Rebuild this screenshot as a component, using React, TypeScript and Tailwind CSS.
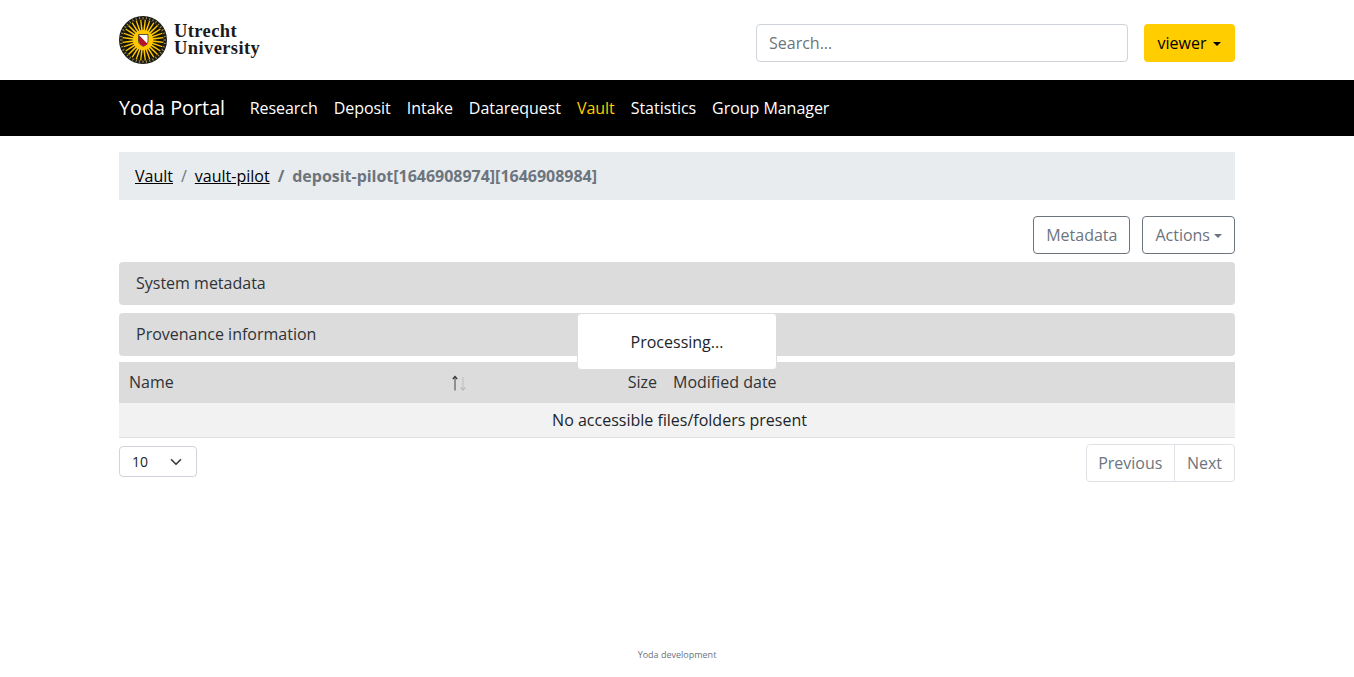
const navItems = ["Research", "Deposit", "Intake", "Datarequest", "Vault", "Statistics", "Group Manager"];

function Seal() {
  const rays = Array.from({ length: 28 }, (_, i) => (i * 360) / 28);
  const specks = Array.from({ length: 40 }, (_, i) => (i * 360) / 40);
  return (
    <svg width="48" height="48" viewBox="0 0 48 48" className="shrink-0">
      <circle cx="24" cy="24" r="24" fill="#1a1a12" />
      {specks.map((a) => (
        <rect key={a} x="23.500" y="1" width="1" height="2" fill="#a89a6a" transform={`rotate(${a} 24 24)`} />
      ))}
      <circle cx="24" cy="24" r="20.500" fill="#ffc800" />
      {rays.map((a) => (
        <polygon key={a} points="22.300,3.500 25.700,3.500 24.300,14 23.700,14" fill="#15130a" transform={`rotate(${a} 24 24)`} />
      ))}
      <path d="M19.500 18.500h9.500v6.500c0 2.800-2.300 4.300-4.700 5.300-2.400-1-4.800-2.500-4.800-5.300z" fill="#fff" stroke="#1a1a12" strokeWidth="0.7" />
      <path d="M19.900 19 28.700 28c-1 1-2.800 1.700-4.400 2.200-2.300-1-4.400-2.400-4.400-5.200z" fill="#b5122b" />
    </svg>
  );
}

function SortIcon() {
  return (
    <svg width="16" height="18" viewBox="0 0 16 18" fill="none" className="shrink-0">
      <path d="M4 17.500V5" stroke="#777" strokeWidth="1.500" />
      <path d="M1.800 6 4 3.500 6.200 6" stroke="#333" strokeWidth="1.200" />
      <path d="M12 4v12.500" stroke="#c8c8c8" strokeWidth="1.500" />
      <path d="M9.800 14.500 12 17l2.200-2.500" stroke="#b8b8b8" strokeWidth="1.200" />
    </svg>
  );
}

export default function App() {
  return (
    <div className="flex min-h-[677px] flex-col bg-white font-['Open_Sans',sans-serif] text-[16px] text-[#212529]">
      <header className="h-20 px-[119px]">
        <div className="flex h-full items-center justify-between">
          <div className="flex items-center gap-[7px]">
            <Seal />
            <div className="font-['Liberation_Serif',serif] text-[18.500px] font-bold leading-[17px] tracking-[0.4px] text-[#1a1a1a]">
              <div>Utrecht</div>
              <div>University</div>
            </div>
          </div>
          <div className="mt-[6px] flex items-center gap-4">
            <input
              placeholder="Search..."
              className="h-[38px] w-[372px] rounded border border-[#ced4da] px-3 text-[16px] outline-none placeholder:text-[#6c757d]"
            />
            <button className="flex h-[38px] w-[91px] items-center justify-center rounded bg-[#ffcd00] text-[16px] text-black">
              viewer
              <span className="ml-[7px] mt-[1px] h-0 w-0 border-x-[4.800px] border-t-[4.800px] border-x-transparent border-t-current" />
            </button>
          </div>
        </div>
      </header>

      <nav className="flex h-14 items-center bg-black px-[119px] text-white">
        <span className="mr-[16.500px] text-[19.800px]">Yoda Portal</span>
        <ul className="flex tracking-[-0.04px]">
          {navItems.map((item) => (
            <li key={item} className={item === "Vault" ? "px-2 text-[#ffcd00]" : "px-2"}>
              {item}
            </li>
          ))}
        </ul>
      </nav>

      <main className="flex flex-1 flex-col px-[119px] pt-4">
        <div className="flex h-12 items-center bg-[#e9ecef] px-4">
          <a className="text-black underline">Vault</a>
          <span className="px-2 text-[#6c757d]">/</span>
          <a className="text-black underline">vault-pilot</a>
          <span className="px-2 font-bold text-[#6c757d]">/</span>
          <span className="font-bold tracking-[-0.02px] text-[#6c757d]">deposit-pilot[1646908974][1646908984]</span>
        </div>

        <div className="mt-4 flex justify-end gap-3">
          <button className="h-[38px] rounded border border-[#6c757d] px-3 text-[#6c757d]">Metadata</button>
          <button className="flex h-[38px] items-center rounded border border-[#6c757d] px-3 text-[#6c757d]">
            Actions
            <span className="ml-1 mt-[1px] h-0 w-0 border-x-[4px] border-t-[4px] border-x-transparent border-t-current" />
          </button>
        </div>

        <div className="mt-2 flex h-[43px] items-center rounded bg-[#dcdcdc] px-[17px] pb-[2px] text-[#2f3337]">System metadata</div>
        <div className="mt-2 flex h-[43px] items-center rounded bg-[#dcdcdc] px-[17px] pb-[2px] text-[#2f3337]">Provenance information</div>

        <div className="relative">
          <div className="absolute left-[458px] top-[-43px] z-10 flex h-[57px] w-[200px] items-center justify-center rounded border border-[#dddddd] bg-white">
            Processing...
          </div>
          <div className="mt-[6px] flex h-[41px] items-center bg-[#dcdcdc] pb-[2px] text-[#2f3337]">
            <span className="w-[332px] pl-[10px]">Name</span>
            <SortIcon />
            <span className="w-[190px] text-right">Size</span>
            <span className="ml-4">Modified date</span>
          </div>
          <div className="flex h-[35px] items-center justify-center border-b border-[#dee2e6] bg-[#f2f2f2] pl-[5px]">
            No accessible files/folders present
          </div>
        </div>

        <div className="mt-[6px] flex items-start justify-between">
          <div className="mt-[2px] flex h-[31px] w-[78px] items-center justify-between rounded border border-[#ced4da] pl-3 pr-[14px] text-[14px]">
            10
            <svg width="12" height="12" viewBox="0 0 16 16" fill="none" stroke="#343a40" strokeWidth="2.200" strokeLinecap="round" strokeLinejoin="round">
              <path d="m2 5 6 6 6-6" />
            </svg>
          </div>
          <div className="flex h-[38px] rounded border border-[#dee2e6] text-[#6c757d]">
            <span className="flex items-center border-r border-[#dee2e6] pl-[11px] pr-[11.500px]">Previous</span>
            <span className="flex items-center px-3">Next</span>
          </div>
        </div>

        <footer className="mt-auto flex h-[30px] justify-center pt-[2px] text-[9px] leading-3 text-[#6c757d]">Yoda development</footer>
      </main>
    </div>
  );
}
